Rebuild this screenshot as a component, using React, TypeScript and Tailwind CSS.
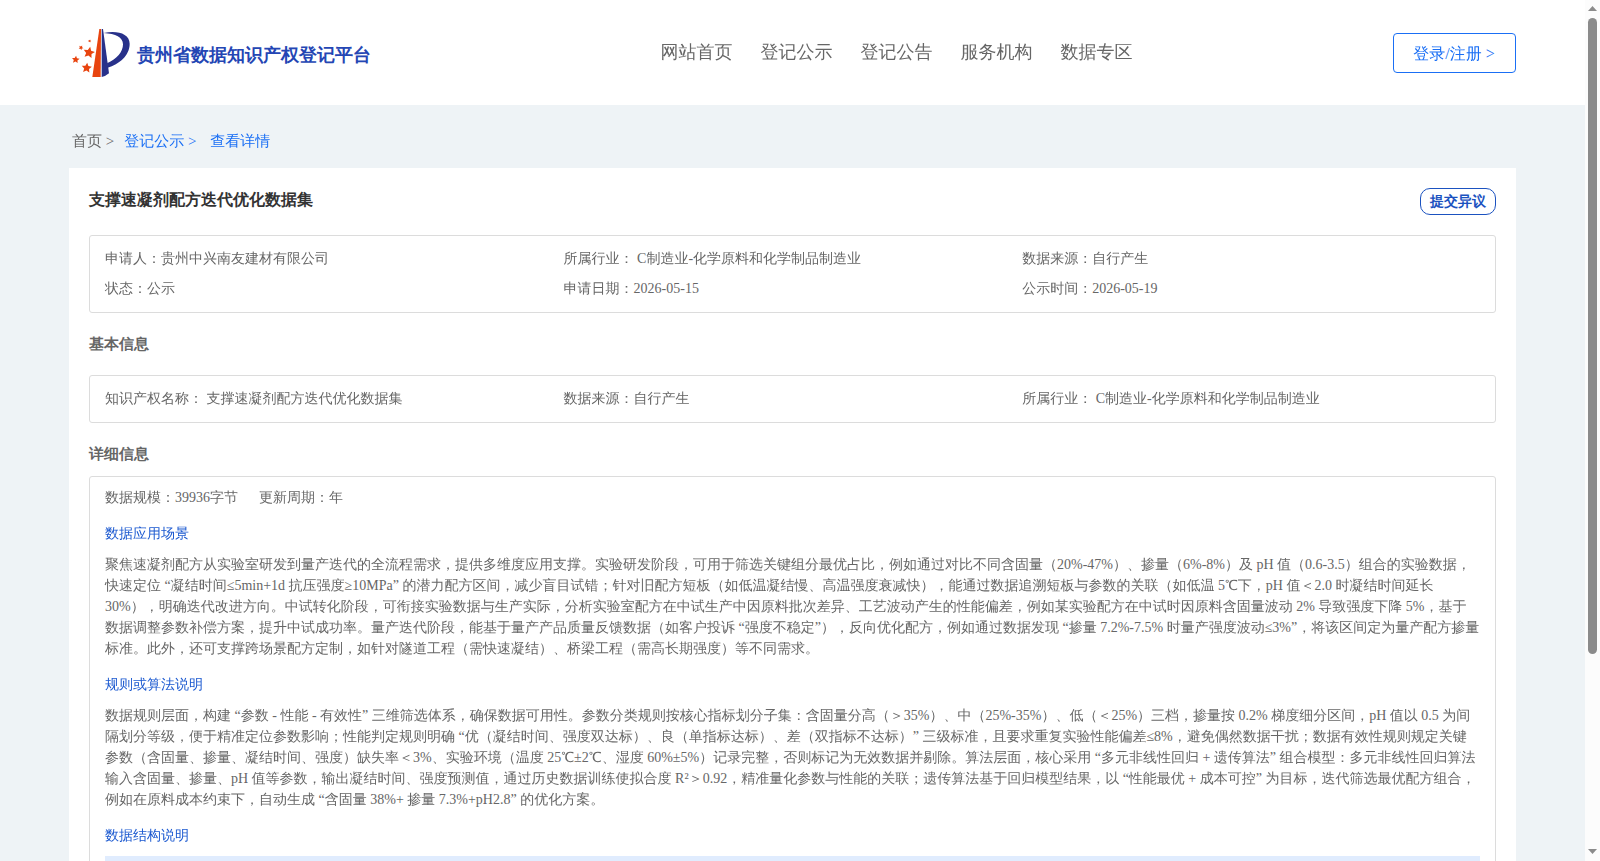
import type { ReactNode } from 'react';

const navItems = ['网站首页', '登记公示', '登记公告', '服务机构', '数据专区'];

const scenario = [
  '聚焦速凝剂配方从实验室研发到量产迭代的全流程需求，提供多维度应用支撑。实验研发阶段，可用于筛选关键组分最优占比，例如通过对比不同含固量（20%-47%）、掺量（6%-8%）及 pH 值（0.6-3.5）组合的实验数据，',
  '快速定位 “凝结时间≤5min+1d 抗压强度≥10MPa” 的潜力配方区间，减少盲目试错；针对旧配方短板（如低温凝结慢、高温强度衰减快），能通过数据追溯短板与参数的关联（如低温 5℃下，pH 值＜2.0 时凝结时间延长',
  '30%），明确迭代改进方向。中试转化阶段，可衔接实验数据与生产实际，分析实验室配方在中试生产中因原料批次差异、工艺波动产生的性能偏差，例如某实验配方在中试时因原料含固量波动 2% 导致强度下降 5%，基于',
  '数据调整参数补偿方案，提升中试成功率。量产迭代阶段，能基于量产产品质量反馈数据（如客户投诉 “强度不稳定”），反向优化配方，例如通过数据发现 “掺量 7.2%-7.5% 时量产强度波动≤3%”，将该区间定为量产配方掺量',
  '标准。此外，还可支撑跨场景配方定制，如针对隧道工程（需快速凝结）、桥梁工程（需高长期强度）等不同需求。',
];

const rules = [
  '数据规则层面，构建 “参数 - 性能 - 有效性” 三维筛选体系，确保数据可用性。参数分类规则按核心指标划分子集：含固量分高（＞35%）、中（25%-35%）、低（＜25%）三档，掺量按 0.2% 梯度细分区间，pH 值以 0.5 为间',
  '隔划分等级，便于精准定位参数影响；性能判定规则明确 “优（凝结时间、强度双达标）、良（单指标达标）、差（双指标不达标）” 三级标准，且要求重复实验性能偏差≤8%，避免偶然数据干扰；数据有效性规则规定关键',
  '参数（含固量、掺量、凝结时间、强度）缺失率＜3%、实验环境（温度 25℃±2℃、湿度 60%±5%）记录完整，否则标记为无效数据并剔除。算法层面，核心采用 “多元非线性回归 + 遗传算法” 组合模型：多元非线性回归算法',
  '输入含固量、掺量、pH 值等参数，输出凝结时间、强度预测值，通过历史数据训练使拟合度 R²＞0.92，精准量化参数与性能的关联；遗传算法基于回归模型结果，以 “性能最优 + 成本可控” 为目标，迭代筛选最优配方组合，',
  '例如在原料成本约束下，自动生成 “含固量 38%+ 掺量 7.3%+pH2.8” 的优化方案。',
];

function Star({ x, y, r, turn = 0 }: { x: number; y: number; r: number; turn?: number }) {
  const points = Array.from({ length: 10 }, (_, i) => {
    const radius = i % 2 ? r * 0.48 : r;
    const a = (Math.PI / 5) * i - Math.PI / 2 + turn;
    return `${x + radius * Math.cos(a)},${y + radius * Math.sin(a)}`;
  }).join(' ');
  return <polygon points={points} fill="#e8440f" />;
}

function Logo() {
  return (
    <svg className="h-[52px] w-[60px] shrink-0 overflow-visible" viewBox="60 51 180 156">
      <path d="M148 57h5l-1 144h-25z" fill="#e8440f" />
      <path d="M155 57h4l18 133q-9 8-22 11z" fill="#28318a" />
      <path d="M161 69C200 60 239 70 239 101C239 137 207 163 173 173L171 160C201 147 219 126 219 103C219 82 197 71 161 69z" fill="#28318a" />
      <Star x={119} y={93} r={5} turn={0.3} />
      <Star x={93} y={113} r={7.5} turn={0.5} />
      <Star x={117} y={128} r={18} turn={0.2} />
      <Star x={77} y={149} r={12} turn={0.1} />
      <Star x={110} y={174} r={16} turn={0.1} />
    </svg>
  );
}

function Box({ children, className }: { children: ReactNode; className: string }) {
  return <div className={`rounded-[3px] border border-[#dcdcdc] pl-[15px] ${className}`}>{children}</div>;
}

function Paragraph({ title, lines }: { title: string; lines: string[] }) {
  return (
    <section>
      <h3 className="mb-[10px] text-[#1b59d0]">{title}</h3>
      <div className="mb-[15px] whitespace-nowrap">
        {lines.map((line) => (
          <p key={line}>{line}</p>
        ))}
      </div>
    </section>
  );
}

function Scrollbar() {
  return (
    <div className="flex h-full w-[15px] shrink-0 flex-col items-center justify-between bg-[#fcfcfc]">
      <div className="flex flex-col items-center">
        <svg className="h-[18px] w-[15px]" viewBox="0 0 15 18">
          <path d="M3 11L7.5 6L12 11z" fill="#8b8b8b" />
        </svg>
        <div className="h-[636px] w-[9px] rounded-full bg-[#8b8b8b]" />
      </div>
      <svg className="h-[18px] w-[15px]" viewBox="0 0 15 18">
        <path d="M3 6L7.5 11L12 6z" fill="#8b8b8b" />
      </svg>
    </div>
  );
}

export default function App() {
  return (
    <div className="flex h-[861px] w-[1600px] overflow-hidden bg-[#eef3f6] font-['Liberation_Serif','WenQuanYi_Zen_Hei',serif] text-[14px] leading-[21px] text-[#666] [text-spacing-trim:space-all]">
      <div className="flex h-full flex-1 flex-col overflow-hidden">
        <header className="flex h-[105px] shrink-0 items-start bg-white pr-[69px] pl-[70px]">
          <div className="mt-[27px] flex w-[590.5px] items-center gap-[7px]">
            <Logo />
            <span className="mt-1 font-['Liberation_Serif',serif] text-[18px] font-bold whitespace-nowrap text-[#2446b4]">贵州省数据知识产权登记平台</span>
          </div>
          <nav className="mt-[39px] flex flex-1 gap-7 text-[18px] leading-[26px]">
            {navItems.map((item) => (
              <a key={item}>{item}</a>
            ))}
          </nav>
          <button className="mt-[33px] h-10 w-[123px] rounded-[4px] border border-[#1a6ff5] pr-px text-[16px] text-[#1a6ff5]">登录/注册 &gt;</button>
        </header>

        <div className="flex h-[63px] shrink-0 items-center pt-[9px] pl-[72px] text-[15px]">
          <span>首页 &gt;</span>
          <span className="ml-[10px] text-[#1a6ff5]">登记公示 &gt;</span>
          <span className="ml-[13.7px] text-[#1a6ff5]">查看详情</span>
        </div>

        <main className="mx-[69px] h-[900px] shrink-0 bg-white px-5 pt-5">
          <div className="flex h-[47px] items-start justify-between font-['Liberation_Serif',serif]">
            <h1 className="mt-px text-[16px] font-bold text-[#333]">支撑速凝剂配方迭代优化数据集</h1>
            <button className="h-[27px] w-[76px] rounded-[10px] border border-[#1b52c0] pr-px text-[14px] font-bold text-[#1b52c0]">提交异议</button>
          </div>

          <Box className="grid h-[78px] grid-cols-[458.6px_458.6px_1fr] content-start gap-y-[9px] pt-[12px]">
            <span>申请人：贵州中兴南友建材有限公司</span>
            <span>所属行业： C制造业-化学原料和化学制品制造业</span>
            <span>数据来源：自行产生</span>
            <span>状态：公示</span>
            <span>申请日期：2026-05-15</span>
            <span>公示时间：2026-05-19</span>
          </Box>

          <h2 className="mt-[21px] font-['Liberation_Serif',serif] text-[15px] font-bold">基本信息</h2>
          <Box className="mt-[20px] grid h-[48px] grid-cols-[458.6px_458.6px_1fr] items-start pt-[12px]">
            <span>知识产权名称： 支撑速凝剂配方迭代优化数据集</span>
            <span>数据来源：自行产生</span>
            <span>所属行业： C制造业-化学原料和化学制品制造业</span>
          </Box>

          <h2 className="mt-[21px] font-['Liberation_Serif',serif] text-[15px] font-bold">详细信息</h2>
          <Box className="mt-[11px] h-[500px] pt-[10px] pr-[15px]">
            <div className="mb-[15px] flex gap-[21px]">
              <span>数据规模：39936字节</span>
              <span>更新周期：年</span>
            </div>
            <Paragraph title="数据应用场景" lines={scenario} />
            <Paragraph title="规则或算法说明" lines={rules} />
            <h3 className="mb-[10px] text-[#1b59d0]">数据结构说明</h3>
            <div className="h-10 bg-[#e0ecfe]" />
          </Box>
        </main>
      </div>
      <Scrollbar />
    </div>
  );
}
